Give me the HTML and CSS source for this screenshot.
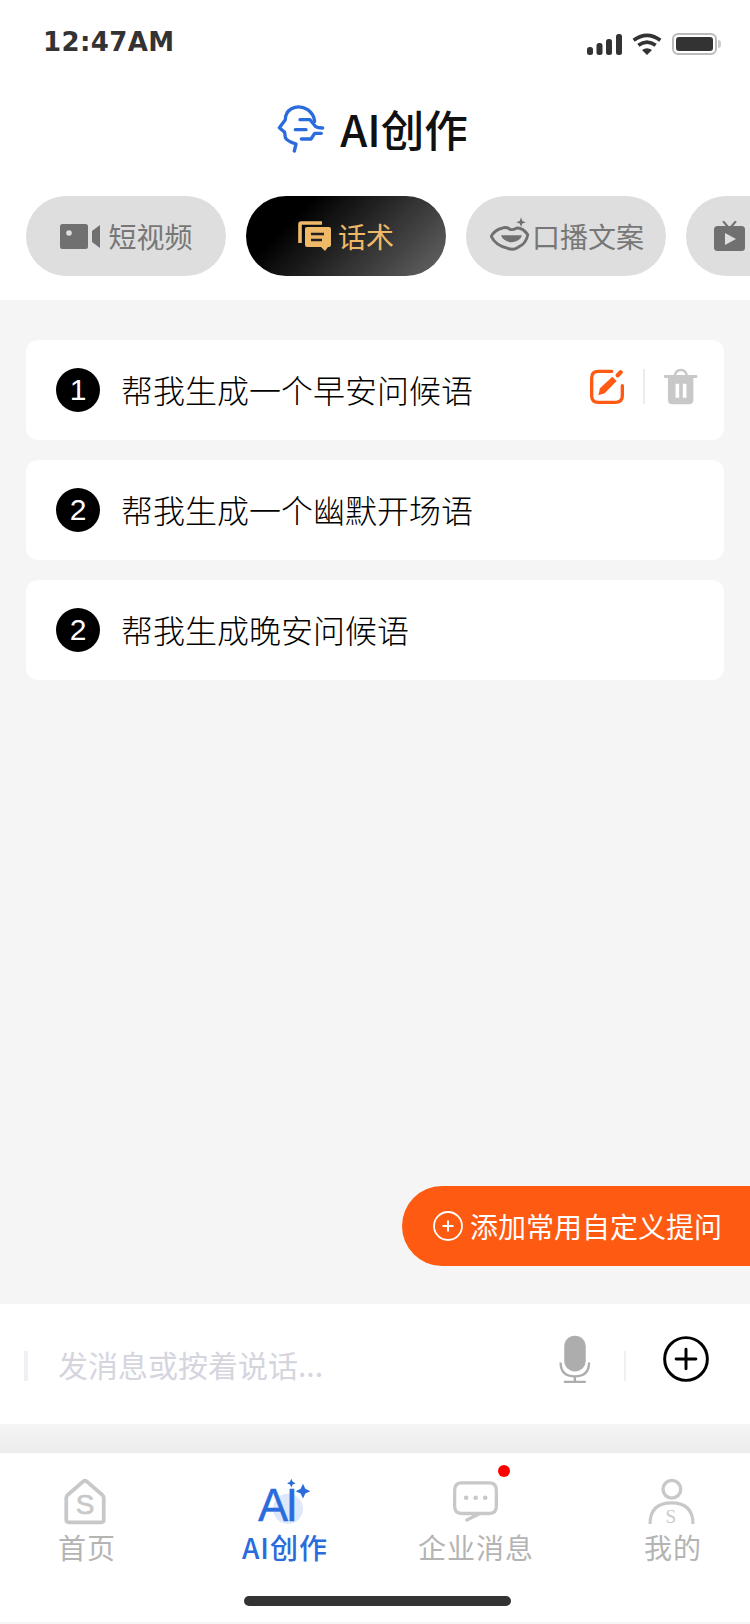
FILE: index.html
```html
<!DOCTYPE html>
<html lang="zh-CN">
<head>
<meta charset="utf-8">
<title>AI创作</title>
<link rel="stylesheet" href="styles.css">
</head>
<body>
<div class="app">
  <div class="status">
    <span class="time">12:47AM</span>
    <div class="status-icons">
      <svg class="ic-signal" viewBox="0 0 35 21"><rect x="0" y="13" width="6" height="8" rx="2.5"/><rect x="9.5" y="9" width="6" height="12" rx="2.5"/><rect x="19" y="5" width="6" height="16" rx="2.5"/><rect x="29" y="0" width="6" height="21" rx="2.5"/></svg>
      <svg class="ic-wifi" viewBox="187 38 86 66"><path d="M190 60 Q230 30 270 60" fill="none" stroke="#333" stroke-width="11"/><path d="M204 75 Q230 56 256 75" fill="none" stroke="#333" stroke-width="11"/><path d="M215 89 L230 104 L245 89 Q230 79 215 89Z" fill="#333"/></svg>
      <div class="battery"><div class="battery-fill"></div></div>
      <div class="battery-tip"></div>
    </div>
  </div>

  <div class="title">
    <svg class="ic-logo" viewBox="110 45 150 150"><path d="M226 97 Q224 76 205 62 Q180 46 155 60 Q138 70 138 92 L120 116 L136 130 L138 146 Q142 156 170 165 L165 186" fill="none" stroke="#2b6cdc" stroke-width="10" stroke-linecap="round" stroke-linejoin="round"/><path d="M182 92 H212 L228 112 Q235 117 250 117 M168 122 H200 M186 150 H215 L226 133 H246" fill="none" stroke="#2b6cdc" stroke-width="10" stroke-linecap="round" stroke-linejoin="round"/></svg>
    <h1 class="title-text">AI创作</h1>
  </div>

  <div class="tabs">
    <div class="pill pill-video">
      <svg class="ic-video" viewBox="0 0 40 25"><rect width="28" height="25" rx="2.5"/><circle cx="9" cy="9" r="2.8" fill="#dedede"/><path d="M32 7 L40 1 V24 L32 18Z"/></svg>
      <span>短视频</span>
    </div>
    <div class="pill pill-active">
      <svg class="ic-talk" viewBox="0 0 33 30"><path d="M2 22 V3 Q2 2 3 2 H24" fill="none" stroke="#efb968" stroke-width="3.6"/><path d="M9 6 H31 Q33 6 33 8 V24 Q33 26 31 26 H30 L27 30 L23 26 H9 Q7 26 7 24 V8 Q7 6 9 6Z" fill="#efb968"/><path d="M13 13 H26 M13 19 H24" stroke="#222" stroke-width="2.4"/></svg>
      <span>话术</span>
    </div>
    <div class="pill pill-lips">
      <svg class="ic-lips" viewBox="118 78 125 104"><path d="M122 137 Q132 118 155 112 Q170 106 182 116 Q190 118 200 112 Q218 108 236 132 Q232 160 205 172 Q190 182 172 174 Q135 165 122 137Z" fill="none" stroke="#707070" stroke-width="9" stroke-linejoin="round"/><path d="M152 134 H218 Q212 154 186 156 Q160 154 152 134Z" fill="#707070"/><path d="M215 78 L219 89 L230 93 L219 97 L215 108 L211 97 L200 93 L211 89Z" fill="#707070"/></svg>
      <span>口播文案</span>
    </div>
    <div class="pill pill-tv">
      <svg class="ic-tv" viewBox="0 0 31 30"><path d="M9 0 L14 6 M22 0 L17 6" stroke="#707070" stroke-width="2"/><rect y="5" width="31" height="25" rx="3.5" fill="#707070"/><path d="M11 12 V24 L22 18Z" fill="#dedede"/></svg>
    </div>
  </div>

  <main class="content">
    <div class="card">
      <span class="num">1</span>
      <span class="card-text">帮我生成一个早安问候语</span>
      <div class="card-actions">
        <svg class="ic-edit" viewBox="60 55 105 105"><path d="M125 62 H85 Q65 62 65 82 V135 Q65 155 85 155 H135 Q157 155 157 135 V105" fill="none" stroke="#ff5a14" stroke-width="10" stroke-linecap="round"/><path d="M85 134 L90 113 L127 78 L140 91 L104 128Z" fill="#ff5a14"/><path d="M143 74 L152 65" stroke="#ff5a14" stroke-width="13" stroke-linecap="round"/></svg>
        <span class="vline"></span>
        <svg class="ic-trash" viewBox="280 52 106 112"><path d="M287 78 H380" stroke="#c8c8c8" stroke-width="9" stroke-linecap="round"/><path d="M316 76 Q318 58 334 58 Q350 58 352 76" fill="none" stroke="#c8c8c8" stroke-width="7"/><path d="M295 82 H372 V148 Q372 162 358 162 H309 Q295 162 295 148Z" fill="#c8c8c8"/><path d="M318 100 H329 V142 H318Z M340 100 H351 V142 H340Z" fill="#fff"/></svg>
      </div>
    </div>
    <div class="card">
      <span class="num">2</span>
      <span class="card-text">帮我生成一个幽默开场语</span>
    </div>
    <div class="card">
      <span class="num">2</span>
      <span class="card-text">帮我生成晚安问候语</span>
    </div>
    <button class="fab">
      <svg class="ic-fab" viewBox="0 0 30 30"><circle cx="15" cy="15" r="14" fill="none" stroke="#fff" stroke-width="1.8"/><path d="M9.5 15 H20.5 M15 9.5 V20.5" stroke="#fff" stroke-width="2"/></svg>
      <span>添加常用自定义提问</span>
    </button>
  </main>

  <div class="input-bar">
    <span class="bar-mark"></span>
    <span class="placeholder">发消息或按着说话...</span>
    <svg class="ic-mic" viewBox="60 45 95 145"><rect x="75" y="47" width="65" height="108" rx="32" fill="#adadad"/><path d="M64 128 Q64 170 107 170 Q150 170 150 128" fill="none" stroke="#adadad" stroke-width="7"/><path d="M107 170 V187 M74 187 H140" stroke="#adadad" stroke-width="7"/></svg>
    <span class="bar-mark bar-mark-thin"></span>
    <svg class="ic-plus" viewBox="368 50 140 140"><circle cx="438" cy="120" r="65" fill="none" stroke="#000" stroke-width="9"/><path d="M408 120 H468 M438 90 V150" stroke="#000" stroke-width="9" stroke-linecap="round"/></svg>
  </div>

  <div class="shadow-gap"></div>

  <nav class="tabbar">
    <div class="tab-row">
      <div class="tab">
        <svg class="ic-tab ic-tab-left" viewBox="75 55 120 135"><path d="M88 185 Q80 185 80 177 V114 Q80 108 84 105 L130 65 Q135 61 140 65 L186 105 Q190 108 190 114 V177 Q190 185 182 185Z" fill="none" stroke="#c8c8c8" stroke-width="11" stroke-linejoin="round"/><text class="s-sans" x="135" y="161" text-anchor="middle">S</text></svg>
        <span class="tab-label">首页</span>
      </div>
      <div class="tab tab-active">
        <svg class="ic-tab" viewBox="655 45 165 140"><ellipse cx="745" cy="140" rx="45" ry="45" fill="#dfe8fb"/><text class="ai-mark" x="655" y="178">AI</text><path d="M790 65 L797 80 L812 87 L797 94 L790 109 L783 94 L768 87 L783 80Z M755 50 L759 59 L768 63 L759 67 L755 76 L751 67 L742 63 L751 59Z" fill="#2b6cdc"/></svg>
        <span class="tab-label">AI创作</span>
      </div>
      <div class="tab">
        <svg class="ic-tab" viewBox="68 55 140 130"><path d="M160 158 H95 Q73 158 73 136 V87 Q73 65 95 65 H178 Q200 65 200 87 V136 Q200 158 178 158 H150 L110 178" fill="none" stroke="#c8c8c8" stroke-width="10" stroke-linecap="round" stroke-linejoin="round"/><circle cx="108" cy="110" r="7" fill="#c8c8c8"/><circle cx="137" cy="110" r="7" fill="#c8c8c8"/><circle cx="166" cy="110" r="7" fill="#c8c8c8"/></svg>
        <span class="badge"></span>
        <span class="tab-label">企业消息</span>
      </div>
      <div class="tab">
        <svg class="ic-tab ic-tab-left" viewBox="655 55 135 135"><circle cx="725" cy="88" r="26" fill="none" stroke="#c8c8c8" stroke-width="10"/><path d="M661 190 Q661 128 724 128 Q787 128 787 190" fill="none" stroke="#c8c8c8" stroke-width="9"/><text class="s-serif" x="722" y="186" text-anchor="middle">S</text></svg>
        <span class="tab-label">我的</span>
      </div>
    </div>
    <div class="home-indicator"></div>
  </nav>
</div>
</body>
</html>
```

FILE: styles.css
```css
* { box-sizing: border-box; }
html, body { margin: 0; padding: 0; }
body {
  width: 750px;
  height: 1624px;
  overflow: hidden;
  background: #fff;
  font-family: "Noto Sans CJK SC", "Liberation Sans", sans-serif;
}
.app {
  width: 750px;
  height: 1624px;
  display: flex;
  flex-direction: column;
}
svg { display: block; flex: none; }

/* status bar */
.status {
  height: 85px;
  flex: none;
  display: flex;
  justify-content: space-between;
  align-items: flex-start;
  padding: 23px 29px 0 43px;
}
.time {
  font-family: "DejaVu Sans", "Liberation Sans", sans-serif;
  font-size: 26px;
  font-weight: 700;
  line-height: 38px;
  letter-spacing: 0.4px;
  color: #333;
}
.status-icons {
  display: flex;
  align-items: center;
  padding-top: 10px;
}
.ic-signal { width: 35px; height: 21px; fill: #333; margin-right: 10px; }
.ic-wifi { width: 30px; height: 22px; margin-right: 10px; }
.battery {
  width: 45px;
  height: 22px;
  border: 2px solid #bbb;
  border-radius: 6px;
  padding: 2px;
}
.battery-fill { width: 100%; height: 100%; background: #333; border-radius: 3px; }
.battery-tip { width: 3px; height: 8px; margin-left: 1px; background: #ccc; border-radius: 0 3px 3px 0; }

/* title */
.title {
  height: 90px;
  flex: none;
  display: flex;
  justify-content: center;
  align-items: center;
  padding: 0 6px 2px 0;
}
.ic-logo { width: 50px; height: 50px; margin: 0 14px 0 0; }
.title-text {
  margin: 0;
  font-size: 43.5px;
  font-weight: 500;
  line-height: 60px;
  color: #111;
}

/* category pills */
.tabs {
  height: 125px;
  flex: none;
  display: flex;
  gap: 20px;
  padding: 21px 0 0 26px;
  overflow: hidden;
}
.pill {
  width: 200px;
  height: 80px;
  flex: none;
  display: flex;
  align-items: center;
  justify-content: center;
  gap: 7px;
  border-radius: 40px;
  background: #dedede;
  color: #777;
  font-size: 28px;
}
.pill-video { gap: 8px; padding-left: 1px; }
.pill-lips { gap: 2px; padding-left: 2px; }
.pill-tv { justify-content: flex-start; padding-left: 28px; }
.pill-active {
  background: linear-gradient(135deg, #000 25%, #666 100%);
  color: #efb968;
}
.ic-video { width: 40px; height: 25px; fill: #707070; }
.ic-talk { width: 33px; height: 30px; }
.ic-lips { width: 40px; height: 34px; margin-top: -4px; }
.ic-tv { width: 31px; height: 30px; }

/* list */
.content {
  position: relative;
  flex: 1;
  background: #f5f5f5;
  padding: 40px 26px 0;
  display: flex;
  flex-direction: column;
  gap: 20px;
}
.card {
  height: 100px;
  display: flex;
  align-items: center;
  padding-left: 30px;
  background: #fff;
  border-radius: 12px;
}
.num {
  width: 44px;
  height: 44px;
  flex: none;
  display: flex;
  align-items: center;
  justify-content: center;
  border-radius: 50%;
  background: #000;
  color: #fff;
  font-family: "Liberation Sans", sans-serif;
  font-size: 30px;
}
.card-text {
  margin: -2px 0 0 21px;
  font-size: 32px;
  font-weight: 300;
  line-height: 44px;
  color: #000;
}
.card-actions {
  margin-left: auto;
  display: flex;
  align-items: center;
  padding: 0 26px 8px 0;
}
.ic-edit { width: 35px; height: 35px; }
.vline { width: 2px; height: 35px; margin: 0 18px; background: #ececec; }
.ic-trash { width: 35px; height: 37px; }

.fab {
  position: absolute;
  right: 0;
  bottom: 38px;
  width: 348px;
  height: 80px;
  display: flex;
  align-items: center;
  gap: 7px;
  padding: 0 0 0 31px;
  border: 0;
  border-radius: 40px 0 0 40px;
  background: #ff5a12;
  color: #fff;
  font-family: inherit;
  font-size: 28px;
}
.ic-fab { width: 30px; height: 30px; }

/* input */
.input-bar {
  height: 120px;
  flex: none;
  display: flex;
  align-items: center;
  padding: 4px 0 0 24px;
  background: #fff;
}
.bar-mark { width: 4px; height: 30px; background: #eef0f5; flex: none; }
.bar-mark-thin { width: 2px; margin-left: 33px; }
.placeholder {
  margin: -4px 0 0 30px;
  font-size: 30px;
  line-height: 40px;
  color: #d5d5de;
}
.ic-mic { width: 32px; height: 48px; margin: -15px 0 0 auto; }
.ic-plus { width: 46px; height: 46px; margin: -15px 41px 0 37px; }

.shadow-gap {
  height: 29px;
  flex: none;
  background: linear-gradient(#f5f5f5, #ececec);
}

/* bottom tabs */
.tabbar {
  height: 171px;
  flex: none;
  background: #fff;
  border-bottom: 2px solid #f5f5f5;
}
.tab-row {
  display: flex;
  padding: 25px 0 0 27px;
}
.tab {
  position: relative;
  width: 120px;
  display: flex;
  flex-direction: column;
  align-items: center;
  font-size: 28px;
  color: #b4b4b4;
}
.tab-label {
  margin-top: 9px;
  line-height: 28px;
  letter-spacing: 1px;
}
.tab:nth-child(2) { margin-left: 78px; }
.tab:nth-child(3) { margin-left: 71px; }
.tab:nth-child(4) { margin-left: 77px; }
.tab-active { color: #2b6cdc; font-weight: 500; }
.ic-tab { width: 46px; height: 46px; overflow: visible; }
.ic-tab-left { margin-right: 4px; }
.tab-active .ic-tab { width: 55px; height: 47px; margin: -1px 0 0; }
.badge {
  position: absolute;
  top: -13px;
  left: 82px;
  width: 12px;
  height: 12px;
  border-radius: 50%;
  background: #f00;
}
.home-indicator {
  width: 267px;
  height: 10px;
  margin: 35px 0 0 244px;
  border-radius: 5px;
  background: #333;
}

/* text inside icons */
.s-sans { font-family: "Liberation Sans", sans-serif; font-size: 82px; fill: #c8c8c8; stroke: #c8c8c8; stroke-width: 2px; }
.s-serif { font-family: "Liberation Serif", serif; font-size: 56px; fill: #c8c8c8; }
.ai-mark { font-family: "Liberation Sans", sans-serif; font-size: 136px; letter-spacing: -8px; fill: #2b6cdc; stroke: #2b6cdc; stroke-width: 1px; }
```
